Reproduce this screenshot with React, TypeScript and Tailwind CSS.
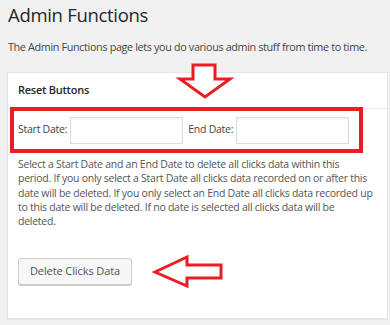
import React from "react";

export default function App() {
  return (
    <div
      className="relative w-[390px] h-[325px] overflow-hidden bg-[#f1f1f1] text-[#444]"
      style={{ fontFamily: '"Open Sans", "Noto Sans", sans-serif' }}
    >
      <div className="pl-[8px] pt-0">
        <h1 className="text-[18.5px] leading-[29px] font-normal text-[#23282d] tracking-[-0.3px]">
          Admin Functions
        </h1>
        <p className="mt-[9px] text-[10.8px] leading-[18px] text-[#444] tracking-[-0.35px]">
          The Admin Functions page lets you do various admin stuff from time to time.
        </p>
      </div>

      <div className="ml-[7px] mr-[2px] mt-[16px] h-[247px] border border-[#e5e5e5] bg-white shadow-[0_1px_1px_rgba(0,0,0,0.04)]">
        <div className="h-[36px] flex items-center px-[10px] border-b border-[#eee]">
          <span className="text-[11px] font-semibold text-[#23282d] tracking-[-0.25px]">
            Reset Buttons
          </span>
        </div>
        <div className="ml-[2px] -mt-[2px] w-[353px] h-[46px] border-[4px] border-[#ec1c24] flex items-center pl-[4px] text-[10.5px] text-[#444] tracking-[-0.25px]">
          <span>Start Date:</span>
          <div className="ml-[3px] w-[113px] h-[27px] border border-[#ddd] shadow-[inset_0_1px_2px_rgba(0,0,0,0.07)] bg-white" />
          <span className="ml-[5px]">End Date:</span>
          <div className="ml-[3px] w-[113px] h-[27px] border border-[#ddd] shadow-[inset_0_1px_2px_rgba(0,0,0,0.07)] bg-white" />
        </div>
        <p className="mt-[4px] ml-[10px] w-[368px] whitespace-nowrap text-[10.5px] leading-[14.3px] text-[#555] tracking-[-0.25px]">
          Select a Start Date and an End Date to delete all clicks data within this
          <br />
          period. If you only select a Start Date all clicks data recorded on or after this
          <br />
          date will be deleted. If you only select an End Date all clicks data recorded up
          <br />
          to this date will be deleted. If no date is selected all clicks data will be
          <br />
          deleted.
        </p>
        <div className="ml-[10px] mt-[29px]">
          <button className="h-[27px] w-[114px] rounded-[3px] border border-[#ccc] bg-[#f7f7f7] shadow-[0_1px_0_#ccc] text-[11px] text-[#555] tracking-[-0.1px]">
            Delete Clicks Data
          </button>
        </div>
      </div>

      <svg
        className="absolute left-0 top-0"
        width="390"
        height="325"
        viewBox="0 0 390 325"
      >
        <polygon
          points="193,65 215,65 215,79 230,79 205,97 180,79 193,79"
          fill="white"
          stroke="#ec1c24"
          strokeWidth="3"
          strokeLinejoin="miter"
        />
        <polygon
          points="155,272 187,257 187,265 221,265 221,278 187,278 187,286"
          fill="white"
          stroke="#ec1c24"
          strokeWidth="3"
          strokeLinejoin="miter"
        />
      </svg>
    </div>
  );
}
